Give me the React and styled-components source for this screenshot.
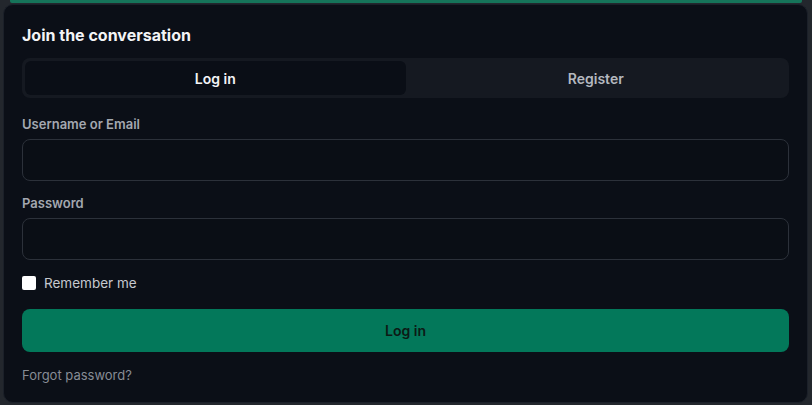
import styled, { createGlobalStyle } from "styled-components";
import { useState } from "react";

const GlobalStyle = createGlobalStyle`
  * { box-sizing: border-box; }
  body {
    margin: 0;
    background-color: #23272d;
    font-family: "Inter", "Noto Sans", sans-serif;
  }
`;

const Pagina = styled.div`
  padding: 0 4px 1px 3px;
`;

const FranjaVerde = styled.div`
  height: 3px;
  margin: 0 6px 1px 7px;
  background-color: #16745a;
  border-radius: 0 0 2px 2px;
`;

const Tarjeta = styled.section`
  background-color: #0b0f17;
  border: 1px solid #1b2029;
  border-radius: 10px;
  padding: 20px 18px 19px 18px;
  display: flex;
  flex-direction: column;
`;

const Titulo = styled.h2`
  margin: 0;
  font-size: 16px;
  line-height: 20px;
  font-weight: 700;
  color: #f3f4f6;
`;

const Pestanas = styled.div`
  margin-top: 13px;
  display: grid;
  grid-template-columns: 1fr 1fr;
  padding: 3px;
  height: 40px;
  background-color: #151921;
  border-radius: 8px;
`;

const Pestana = styled.button`
  border: none;
  border-radius: 6px;
  font-family: inherit;
  font-size: 14px;
  font-weight: 600;
  cursor: pointer;
  background-color: ${(props) => (props.$activa ? "#0a0e16" : "transparent")};
  color: ${(props) => (props.$activa ? "#f3f4f6" : "#b4b8bf")};
`;

const Campo = styled.div`
  display: flex;
  flex-direction: column;
  margin-top: ${(props) => props.$arriba}px;
`;

const Etiqueta = styled.label`
  font-size: 13px;
  line-height: 16px;
  font-weight: 600;
  color: #a3a8b0;
  margin-bottom: 7px;
`;

const Entrada = styled.input`
  height: 42px;
  border: 1px solid #2c313a;
  border-radius: 8px;
  background-color: #0a0e15;
  color: #f3f4f6;
  font-family: inherit;
  font-size: 14px;
  padding: 0 12px;
  outline: none;
`;

const FilaRecordar = styled.label`
  margin-top: 15px;
  display: flex;
  align-items: center;
  gap: 8px;
  height: 16px;
  font-size: 13.5px;
  color: #c6c9cf;
`;

const Casilla = styled.span`
  width: 14px;
  height: 14px;
  border-radius: 2px;
  background-color: #ffffff;
  display: inline-block;
`;

const BotonEntrar = styled.button`
  margin-top: 18px;
  height: 43px;
  border: none;
  border-radius: 8px;
  background-color: #03785a;
  color: #0c1a15;
  font-family: inherit;
  font-size: 14px;
  font-weight: 600;
  cursor: pointer;
`;

const Olvido = styled.a`
  margin-top: 15px;
  font-size: 13px;
  line-height: 16px;
  color: #878c95;
  text-decoration: none;
  align-self: flex-start;
`;

const App = () => {
  const [pestana, setPestana] = useState("login");

  return (
    <>
      <GlobalStyle />
      <Pagina>
        <FranjaVerde />
        <Tarjeta>
          <Titulo>Join the conversation</Titulo>
          <Pestanas>
            <Pestana $activa={pestana === "login"} onClick={() => setPestana("login")}>
              Log in
            </Pestana>
            <Pestana $activa={pestana === "register"} onClick={() => setPestana("register")}>
              Register
            </Pestana>
          </Pestanas>
          <Campo $arriba={18}>
            <Etiqueta>Username or Email</Etiqueta>
            <Entrada type="text" />
          </Campo>
          <Campo $arriba={14}>
            <Etiqueta>Password</Etiqueta>
            <Entrada type="password" />
          </Campo>
          <FilaRecordar>
            <Casilla />
            Remember me
          </FilaRecordar>
          <BotonEntrar>Log in</BotonEntrar>
          <Olvido href="#">Forgot password?</Olvido>
        </Tarjeta>
      </Pagina>
    </>
  );
};

export default App;
